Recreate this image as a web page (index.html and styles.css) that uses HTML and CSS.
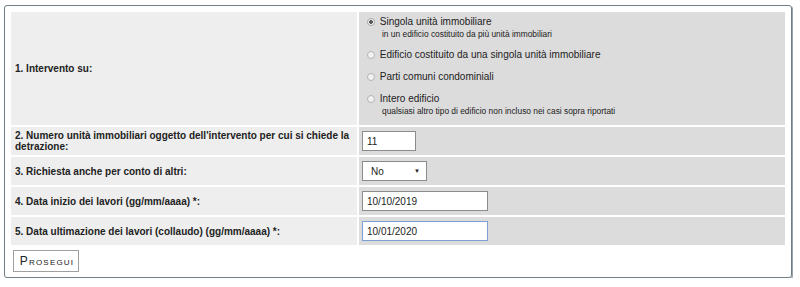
FILE: index.html
```html
<!DOCTYPE html>
<html lang="it">

<head>
  <meta charset="UTF-8">
  <title>Dati intervento</title>
  <link rel="stylesheet" href="styles.css">
</head>

<body>
  <form class="box">
    <table class="form-table">
      <tr>
        <td class="label">1. Intervento su:</td>
        <td class="field radios">
          <div class="opt first">
            <label><input type="radio" name="tipo" checked> Singola unità immobiliare</label>
            <div class="hint">in un edificio costituito da più unità immobiliari</div>
          </div>
          <div class="opt">
            <label><input type="radio" name="tipo"> Edificio costituito da una singola unità immobiliare</label>
          </div>
          <div class="opt">
            <label><input type="radio" name="tipo"> Parti comuni condominiali</label>
          </div>
          <div class="opt last">
            <label><input type="radio" name="tipo"> Intero edificio</label>
            <div class="hint">qualsiasi altro tipo di edificio non incluso nei casi sopra riportati</div>
          </div>
        </td>
      </tr>
      <tr>
        <td class="label">2. Numero unità immobiliari oggetto dell'intervento per cui si chiede la detrazione:</td>
        <td class="field"><input type="text" class="txt num" value="11"></td>
      </tr>
      <tr>
        <td class="label">3. Richiesta anche per conto di altri:</td>
        <td class="field">
          <div class="sel">No <span class="arrow">&#9660;</span></div>
        </td>
      </tr>
      <tr>
        <td class="label">4. Data inizio dei lavori (gg/mm/aaaa) *:</td>
        <td class="field"><input type="text" class="txt date" value="10/10/2019"></td>
      </tr>
      <tr>
        <td class="label">5. Data ultimazione dei lavori (collaudo) (gg/mm/aaaa) *:</td>
        <td class="field"><input type="text" class="txt date focus" value="10/01/2020"></td>
      </tr>
    </table>
    <button type="button" class="btn">Prosegui</button>
  </form>
</body>

</html>
```

FILE: styles.css
```css
body {
  margin: 0;
  padding: 5px 0 0 4px;
  font-family: "Liberation Sans", Arial, sans-serif;
  font-size: 10px;
  color: #222;
  background: #fff;
}
.box {
  width: 778px;
  padding: 4px 4px 5px 4px;
  border: 1px solid #6f7d87;
  border-radius: 3px;
  box-shadow: 1px 1px 0 #9aa4aa;
}
.form-table {
  width: 778px;
  border-spacing: 2px;
}
.form-table td {
  padding: 4px;
  vertical-align: middle;
}
.form-table td.label {
  width: 338px;
  padding: 3px 4px;
  background: #eeeeee;
  font-weight: bold;
  font-size: 10px;
  line-height: 11px;
}
.field {
  background: #dcdcdc;
}
.form-table td.radios {
  padding-top: 3px;
}
.opt {
  margin-bottom: 8px;
  line-height: 14px;
}
.opt.first {
  margin-bottom: 9px;
}
.opt.last {
  margin-bottom: 5px;
}
.opt label {
  display: block;
}
.opt input {
  appearance: none;
  box-sizing: border-box;
  width: 8px;
  height: 8px;
  margin: 0 2px 0 4px;
  border: 1px solid #b4b4b4;
  border-radius: 50%;
  background: #f2f2f2;
  vertical-align: -1px;
}
.opt input:checked {
  background: radial-gradient(circle, #5a5a5a 0 1.6px, #f4f4f4 2.2px);
  border-color: #a8a8a8;
}
.hint {
  font-size: 8.4px;
  line-height: 10px;
  padding-left: 19px;
}
.txt {
  box-sizing: border-box;
  height: 20px;
  margin: 0 0 0 -1px;
  padding: 0 4px;
  border: 1px solid #8c8c8c;
  font-family: "Liberation Sans", Arial, sans-serif;
  font-size: 10px;
  color: #222;
  background: #fff;
  display: block;
}
.num {
  width: 54px;
}
.date {
  width: 126px;
}
.focus {
  border-color: #7c9fd4;
}
.sel {
  box-sizing: border-box;
  width: 65px;
  height: 20px;
  margin-left: -1px;
  padding: 0 6px 0 8px;
  border: 1px solid #8c8c8c;
  background: #fff;
  display: flex;
  align-items: center;
  justify-content: space-between;
}
.arrow {
  font-size: 6px;
}
.btn {
  display: block;
  margin: 3px 0 0 4px;
  height: 22px;
  width: 66px;
  padding: 0 0 0 2px;
  border: 1px solid #a0a0a0;
  background: #fff;
  font-family: "Liberation Sans", Arial, sans-serif;
  font-size: 12px;
  font-variant: small-caps;
  letter-spacing: 1.2px;
  color: #222;
}
```
